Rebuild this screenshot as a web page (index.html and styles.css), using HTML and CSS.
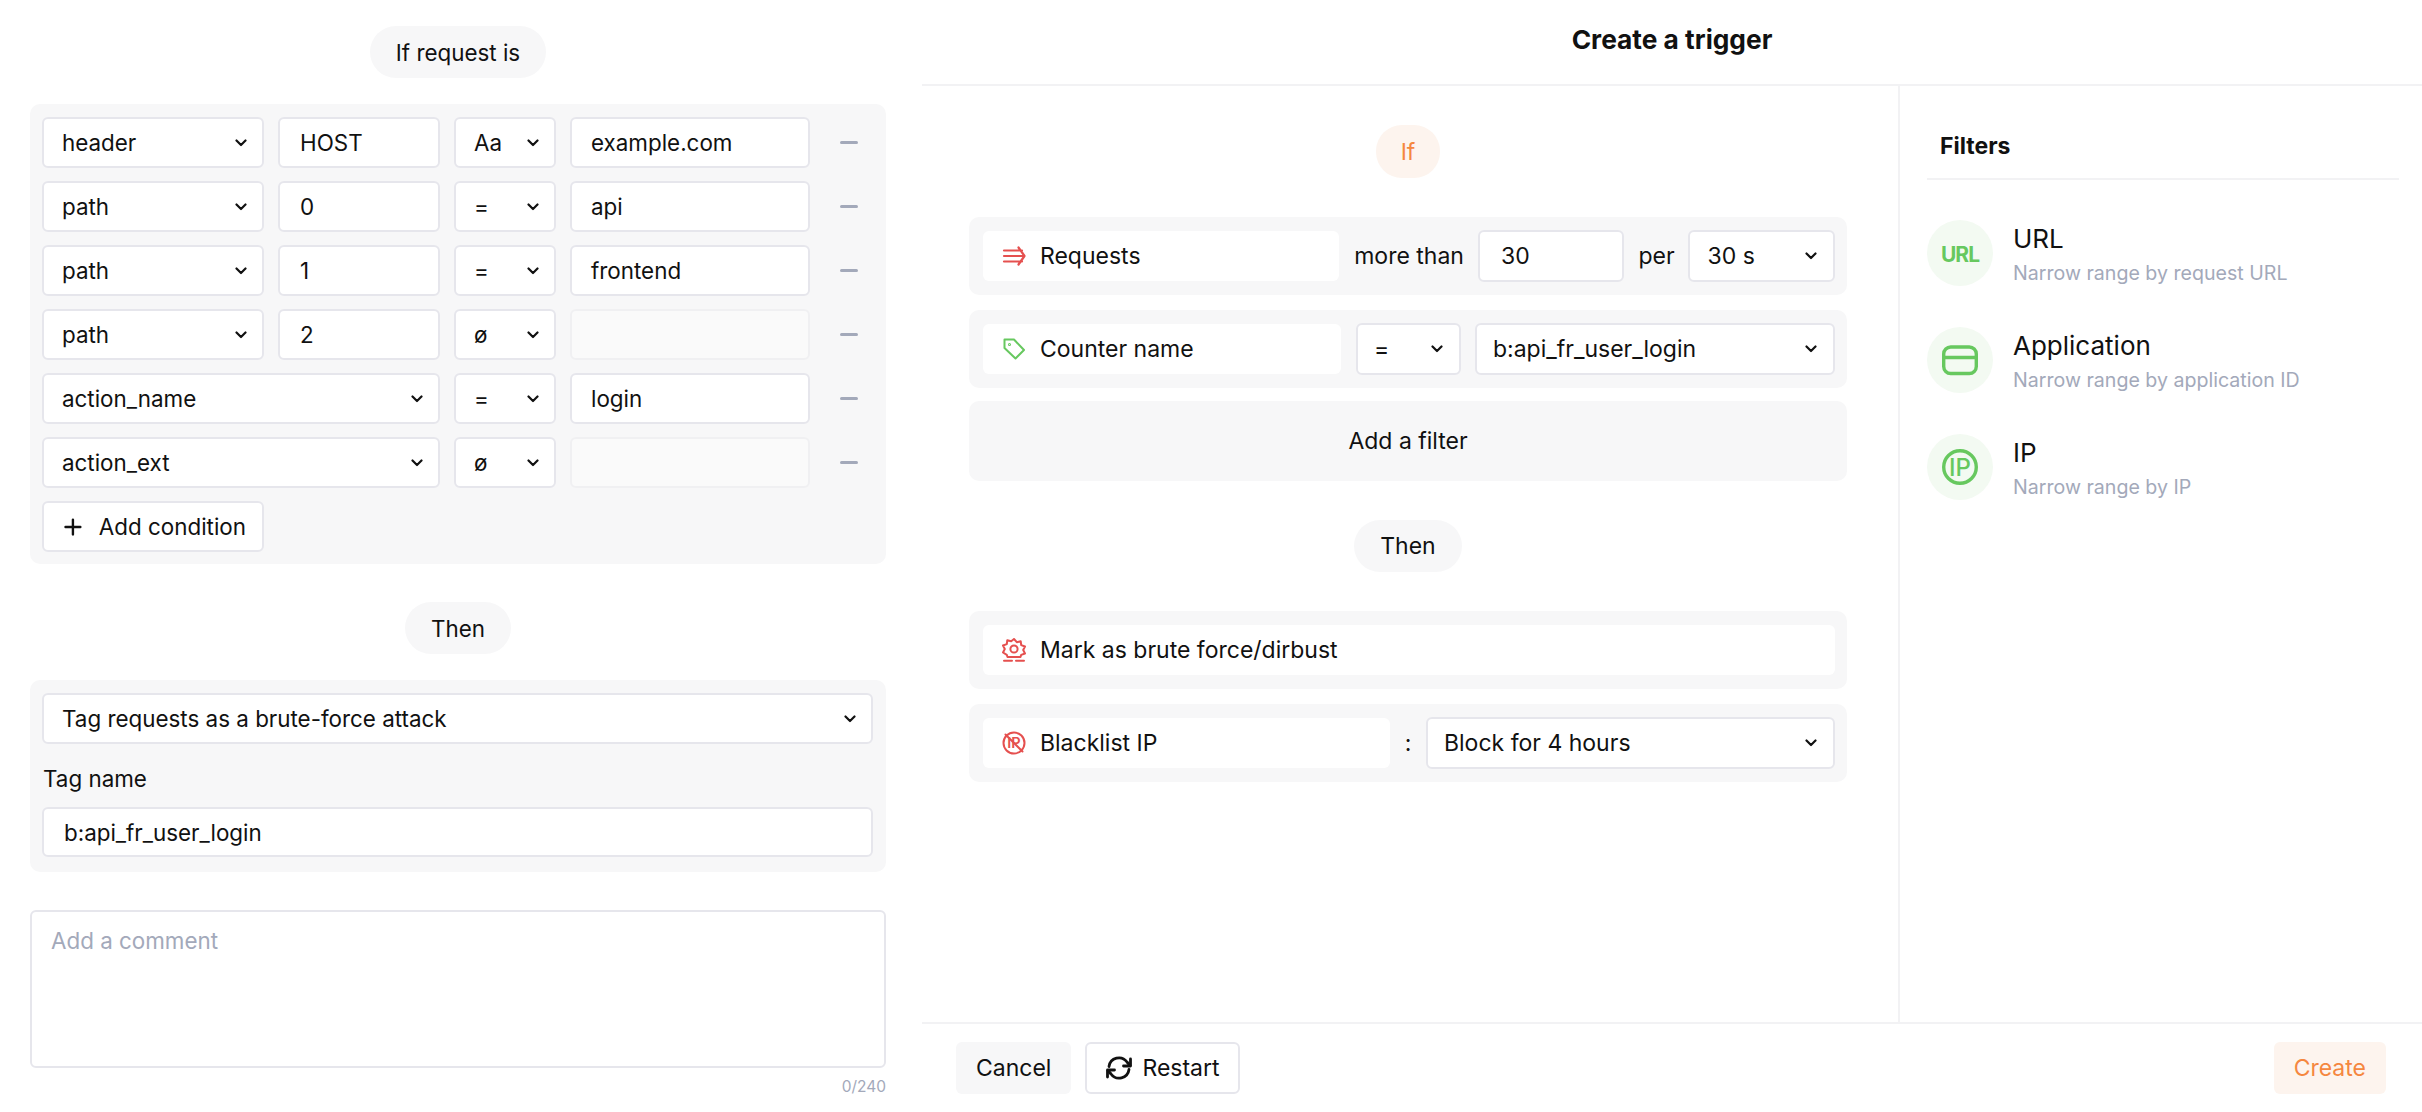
FILE: index.html
```html
<!DOCTYPE html>
<html>

<head>
    <meta name="viewport" content="width=device-width, initial-scale=1.0">
    <link rel="stylesheet" href="styles.css">
    <title>Create a trigger</title>
</head>

<body>
    <svg class="defs" width="0" height="0">
        <symbol id="chev" viewBox="0 0 12 8">
            <path d="M1.500 1.500 6 6l4.500-4.500" fill="none" stroke="currentColor" stroke-width="2.200" stroke-linecap="round" stroke-linejoin="round" />
        </symbol>
    </svg>

    <div class="left">
        <div class="pill-row"><span class="pill">If request is</span></div>

        <div class="panel cond-list">
            <div class="cond">
                <div class="field sel"><span>header</span><svg class="chev"><use href="#chev" /></svg></div>
                <div class="field key">HOST</div>
                <div class="field sel"><span>Aa</span><svg class="chev"><use href="#chev" /></svg></div>
                <div class="field">example.com</div>
                <div class="minus"></div>
            </div>
            <div class="cond">
                <div class="field sel"><span>path</span><svg class="chev"><use href="#chev" /></svg></div>
                <div class="field key">0</div>
                <div class="field sel"><span>=</span><svg class="chev"><use href="#chev" /></svg></div>
                <div class="field">api</div>
                <div class="minus"></div>
            </div>
            <div class="cond">
                <div class="field sel"><span>path</span><svg class="chev"><use href="#chev" /></svg></div>
                <div class="field key">1</div>
                <div class="field sel"><span>=</span><svg class="chev"><use href="#chev" /></svg></div>
                <div class="field">frontend</div>
                <div class="minus"></div>
            </div>
            <div class="cond">
                <div class="field sel"><span>path</span><svg class="chev"><use href="#chev" /></svg></div>
                <div class="field key">2</div>
                <div class="field sel"><span>ø</span><svg class="chev"><use href="#chev" /></svg></div>
                <div class="field off"></div>
                <div class="minus"></div>
            </div>
            <div class="cond">
                <div class="field sel wide"><span>action_name</span><svg class="chev"><use href="#chev" /></svg></div>
                <div class="field sel"><span>=</span><svg class="chev"><use href="#chev" /></svg></div>
                <div class="field">login</div>
                <div class="minus"></div>
            </div>
            <div class="cond">
                <div class="field sel wide"><span>action_ext</span><svg class="chev"><use href="#chev" /></svg></div>
                <div class="field sel"><span>ø</span><svg class="chev"><use href="#chev" /></svg></div>
                <div class="field off"></div>
                <div class="minus"></div>
            </div>
            <div class="cond">
                <div class="field add">
                    <svg class="plus" viewBox="0 0 18 18"><path d="M9 1.500v15M1.500 9h15" fill="none" stroke="#111" stroke-width="2.400" stroke-linecap="round" /></svg>
                    Add condition
                </div>
            </div>
        </div>

        <div class="pill-row then-left"><span class="pill">Then</span></div>

        <div class="panel tag-panel">
            <div class="field sel"><span>Tag requests as a brute-force attack</span><svg class="chev"><use href="#chev" /></svg></div>
            <div class="tag-label">Tag name</div>
            <div class="field tag-input">b:api_fr_user_login</div>
        </div>

        <div class="comment">Add a comment</div>
        <div class="count">0/240</div>
    </div>

    <div class="right">
        <div class="head">Create a trigger</div>

        <div class="middle">
            <div class="builder">
                <div class="pill-row if-row"><span class="pill orange">If</span></div>

                <div class="panel rule">
                    <div class="tile t-left">
                        <svg class="ico" viewBox="0 0 24 24" fill="none" stroke="#e5504f" stroke-width="2.200" stroke-linecap="round" stroke-linejoin="round">
                            <path d="M2 6.500h18M2 12h20M2 17.500h18M16.500 3.500 22.500 12l-6 8.500" />
                        </svg>
                        Requests
                    </div>
                    <span class="word w-more">more than</span>
                    <div class="field f-30">30</div>
                    <span class="word w-per">per</span>
                    <div class="field sel f-sec"><span>30 s</span><svg class="chev"><use href="#chev" /></svg></div>
                </div>

                <div class="panel rule">
                    <div class="tile t-left">
                        <svg class="ico" viewBox="0 0 24 24" fill="none" stroke="#67c85f" stroke-width="2" stroke-linecap="round" stroke-linejoin="round">
                            <path d="M2.500 2.500h9.500l10 10.500-8.500 8.500-11-10.500z" />
                            <circle cx="7.500" cy="7.500" r="0.500" />
                        </svg>
                        Counter name
                    </div>
                    <div class="field sel f-eq"><span>=</span><svg class="chev"><use href="#chev" /></svg></div>
                    <div class="field sel f-grow"><span>b:api_fr_user_login</span><svg class="chev"><use href="#chev" /></svg></div>
                </div>

                <div class="panel add-filter">Add a filter</div>

                <div class="pill-row then-right"><span class="pill">Then</span></div>

                <div class="panel rule">
                    <div class="tile t-full">
                        <svg class="ico" viewBox="0 0 24 24" fill="none" stroke="#e5504f" stroke-width="2" stroke-linecap="round" stroke-linejoin="round">
                            <path d="M12 1l2.800 3.200 3.900-1 .5 3.900 3.800 1.400-1.800 3.500 1.800 3.500-3.800 1.400-.7 2.100H5.500l-.7-2.100L1 14.500l1.800-3.500L1 7.500l3.800-1.400.5-3.900 3.900 1z" />
                            <circle cx="12" cy="11" r="3.600" />
                            <path d="M2 22.800h8M14 22.800h8" />
                        </svg>
                        Mark as brute force/dirbust
                    </div>
                </div>

                <div class="panel rule">
                    <div class="tile t-black">
                        <svg class="ico" viewBox="0 0 24 24" fill="none" stroke="#e5504f" stroke-width="2" stroke-linecap="round">
                            <circle cx="12" cy="12" r="10.500" />
                            <path d="M3.500 3.500l17 17" />
                            <text x="12" y="17" class="ico-txt">IP</text>
                        </svg>
                        Blacklist IP
                    </div>
                    <span class="colon">:</span>
                    <div class="field sel f-grow"><span>Block for 4 hours</span><svg class="chev"><use href="#chev" /></svg></div>
                </div>
            </div>

            <div class="side">
                <div class="side-title">Filters</div>

                <div class="filter">
                    <div class="circle url-txt">URL</div>
                    <div>
                        <div class="f-name">URL</div>
                        <div class="f-sub">Narrow range by request URL</div>
                    </div>
                </div>
                <div class="filter">
                    <div class="circle">
                        <svg class="c-ico" viewBox="0 0 36 36" fill="none" stroke="#67c85f" stroke-width="3.400">
                            <rect x="1.700" y="5" width="32.600" height="26.500" rx="7" />
                            <path d="M1.700 15.500h32.600" />
                        </svg>
                    </div>
                    <div>
                        <div class="f-name">Application</div>
                        <div class="f-sub">Narrow range by application ID</div>
                    </div>
                </div>
                <div class="filter">
                    <div class="circle">
                        <svg class="c-ico" viewBox="0 0 36 36" fill="none" stroke="#67c85f" stroke-width="3.400">
                            <circle cx="18" cy="18" r="16.300" />
                            <text x="18" y="26.500" class="c-txt">IP</text>
                        </svg>
                    </div>
                    <div>
                        <div class="f-name">IP</div>
                        <div class="f-sub">Narrow range by IP</div>
                    </div>
                </div>
            </div>
        </div>

        <div class="foot">
            <div class="btn grey">Cancel</div>
            <div class="btn outline">
                <svg class="refresh" viewBox="0 0 28 28" fill="none" stroke="#111" stroke-width="2.800" stroke-linecap="round" stroke-linejoin="round">
                    <path d="M4 12.500a10 10 0 0 1 18-4.500l3 3.500" />
                    <path d="M25.500 5v7h-7" />
                    <path d="M24 15.500a10 10 0 0 1-18 4.500l-3-3.500" />
                    <path d="M2.500 23v-7h7" />
                </svg>
                Restart
            </div>
            <div class="btn create">Create</div>
        </div>
    </div>
</body>

</html>
```

FILE: styles.css
```css
* {
    box-sizing: border-box;
}

body {
    font-family: Inter, "Liberation Sans", sans-serif;
    font-size: 23px;
    color: #111;
    background-color: #fff;
    margin: 0;
    width: 2422px;
    height: 1112px;
    display: flex;
    overflow: hidden;
}

.defs {
    position: absolute;
}

.left {
    width: 922px;
    padding: 26px 36px 0 30px;
    font-size: 22.4px;
}

.pill-row {
    display: flex;
    justify-content: center;
}

.pill {
    height: 52px;
    padding: 0 26px;
    border-radius: 26px;
    background-color: #f7f7f8;
    display: flex;
    align-items: center;
}

.pill.orange {
    height: 53px;
    padding: 0 25px;
    background-color: #fdf4ee;
    color: #f5873f;
}

.panel {
    background-color: #f7f7f8;
    border-radius: 10px;
}

.cond-list {
    margin-top: 26px;
    padding: 13px 13px 12px 12px;
    display: flex;
    flex-direction: column;
    gap: 13px;
}

.cond {
    display: grid;
    grid-template-columns: 222px 162px 102px 240px 1fr;
    column-gap: 14px;
    height: 51px;
}

.field {
    height: 51px;
    padding: 0 19px;
    background-color: #fff;
    border: 2px solid #e6e6ec;
    border-radius: 6px;
    display: flex;
    align-items: center;
    white-space: nowrap;
}

.field.off {
    background-color: #fafafa;
    border-color: #f0f0f2;
}

.key {
    padding-left: 20px;
}

.sel {
    justify-content: space-between;
    padding-left: 16px;
    padding-right: 16px;
}

.left .sel {
    padding-left: 18px;
    padding-right: 15px;
}

.wide {
    grid-column: span 2;
}

.chev {
    width: 12px;
    height: 8px;
    flex: none;
}

.minus {
    justify-self: center;
    align-self: center;
    width: 18px;
    height: 3px;
    background-color: #a3a9ba;
    border-radius: 2px;
}

.field.add {
    gap: 17px;
    padding: 0 16px 0 20px;
}

.plus {
    width: 18px;
    height: 18px;
}

.then-left {
    margin-top: 38px;
}

.tag-panel {
    margin-top: 26px;
    padding: 13px 13px 15px 12px;
}

.tag-label {
    margin: 21px 0 14px;
    padding-left: 1px;
    line-height: 28px;
}

.tag-input {
    padding-left: 20px;
    height: 50px;
}

.comment {
    margin-top: 38px;
    height: 158px;
    padding: 15px 19px;
    color: #a3a9ba;
    border: 2px solid #e6e6ec;
    border-radius: 6px;
}

.count {
    margin-top: 9px;
    text-align: right;
    font-size: 15.500px;
    color: #a3a9ba;
}

.right {
    flex: 1;
    display: flex;
    flex-direction: column;
}

.head {
    height: 86px;
    padding-bottom: 6px;
    border-bottom: 2px solid #f2f2f4;
    display: flex;
    align-items: center;
    justify-content: center;
    font-size: 26.300px;
    font-weight: 700;
}

.middle {
    flex: 1;
    display: flex;
}

.builder {
    width: 978px;
    padding: 39px 51px 0 47px;
    border-right: 2px solid #f2f2f4;
}

.if-row {
    margin-bottom: 39px;
}

.rule {
    height: 78px;
    margin-bottom: 15px;
    padding: 0 12px 0 14px;
    display: flex;
    align-items: center;
}

.rule .field {
    height: 52px;
}

.tile {
    height: 50px;
    background-color: #fff;
    border-radius: 6px;
    padding: 0 0 0 19px;
    display: flex;
    align-items: center;
    gap: 14px;
}

.t-left {
    width: 358px;
}

.t-full {
    flex: 1;
}

.t-black {
    width: 407px;
}

.ico {
    width: 24px;
    height: 24px;
    flex: none;
}

.ico-txt {
    font-size: 14.500px;
    font-weight: 600;
    fill: #e5504f;
    stroke: none;
    text-anchor: middle;
}

.word {
    white-space: nowrap;
}

.w-more {
    margin: 0 14px 0 15px;
}

.f-30 {
    width: 147px;
    padding-left: 21px;
}

.w-per {
    margin: 0 13px 0 14px;
}

.f-sec {
    width: 148px;
    padding-left: 18px;
}

.f-eq {
    width: 105px;
    margin: 0 14px 0 15px;
}

.f-grow {
    flex: 1;
}

.add-filter {
    height: 80px;
    margin-top: -2px;
    display: flex;
    align-items: center;
    justify-content: center;
}

.then-right {
    margin: 39px 0 39px;
}

.colon {
    width: 36px;
    text-align: center;
}

.side {
    flex: 1;
    padding: 43px 23px 0 27px;
}

.side-title {
    height: 51px;
    padding: 3px 0 0 13px;
    border-bottom: 2px solid #f2f2f4;
    font-weight: 700;
    margin-bottom: 40px;
}

.filter {
    height: 66px;
    margin-bottom: 41px;
    display: flex;
    gap: 20px;
}

.circle {
    width: 66px;
    height: 66px;
    border-radius: 50%;
    background-color: #f3faf2;
    display: flex;
    align-items: center;
    justify-content: center;
    flex: none;
}

.url-txt {
    color: #67c85f;
    font-weight: 700;
    font-size: 21px;
    letter-spacing: -1px;
    padding-top: 3px;
}

.c-ico {
    width: 36px;
    height: 36px;
}

.c-txt {
    font-size: 24px;
    font-weight: 500;
    fill: #67c85f;
    stroke: none;
    text-anchor: middle;
}

.f-name {
    font-size: 26px;
    line-height: 34px;
    margin-top: 2px;
}

.f-sub {
    font-size: 19.600px;
    line-height: 24px;
    margin-top: 5px;
    color: #a3a9ba;
}

.foot {
    height: 90px;
    border-top: 2px solid #f2f2f4;
    padding: 18px 36px 0 34px;
    display: flex;
    gap: 14px;
}

.btn {
    height: 52px;
    border-radius: 6px;
    display: flex;
    align-items: center;
    padding: 0 20px;
}

.grey {
    background-color: #f7f7f8;
}

.outline {
    border: 2px solid #e6e6ec;
    gap: 9px;
    padding: 0 18px;
}

.refresh {
    width: 28px;
    height: 28px;
}

.create {
    margin-left: auto;
    background-color: #fdf4ee;
    color: #f5873f;
}
```
